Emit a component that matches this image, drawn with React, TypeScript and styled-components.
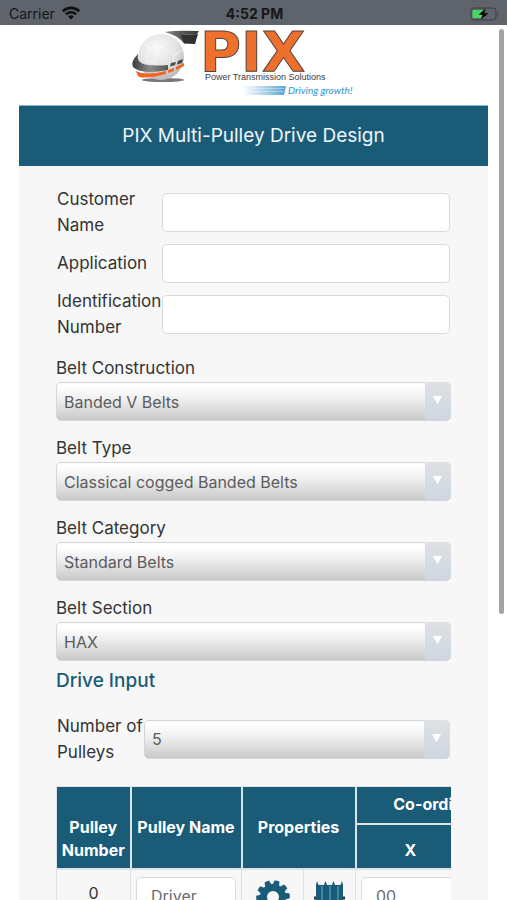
import React from "react";
import styled, { createGlobalStyle } from "styled-components";

const BLUE = "#1a5c78";
const FONT = `Inter, "Liberation Sans", sans-serif`;

const GlobalStyle = createGlobalStyle`
  *, *::before, *::after { box-sizing: border-box; }
  body { margin: 0; background: #fff; font-family: ${FONT}; color: #333; }
`;

const Screen = styled.div`
  position: relative;
  height: 100vh;
  overflow: hidden;
`;

const StatusBar = styled.header`
  display: grid;
  grid-template-columns: 1fr auto 1fr;
  align-items: center;
  height: 25px;
  padding: 2px 7px 0 9px;
  background: #5f636b;
  color: #15171a;
  font-size: 14px;
`;

const Carrier = styled.div`
  display: flex;
  align-items: center;
  gap: 6px;

  svg { margin-bottom: 2px; }
`;

const Clock = styled.time`
  font-size: 14px;
  font-weight: 700;
`;

const Battery = styled.div`
  display: flex;
  justify-content: flex-end;
`;

const Brand = styled.div`
  display: flex;
  justify-content: center;
  height: 80px;
  padding-right: 19px;
`;

const Main = styled.main`
  margin: 0 19px;
  background: #f7f7f7;
`;

const Title = styled.h1`
  margin: 0;
  padding: 18px 0;
  border-top: 1px solid #7fb9d2;
  background: ${BLUE};
  color: #eef5f8;
  font-size: 19px;
  font-weight: 400;
  line-height: 24px;
  text-align: center;
`;

const Form = styled.form`
  padding: 21px 37px 0;
  font-size: 16px;
  line-height: 26px;
`;

const Label = styled.label`
  font-size: 17px;
`;

const TextRows = styled.div`
  display: grid;
  grid-template-columns: 105px 1fr;
  grid-auto-rows: 51px;
  align-items: center;
  padding: 0 1px;

  ${Label} { padding-bottom: 2px; }
`;

const TextBox = styled.input`
  width: 100%;
  height: 39px;
  padding: 0 14px;
  border: 1px solid #d8dadc;
  border-radius: 5px;
  background: #fff;
  color: #6a6c6e;
  font: 16px ${FONT};
`;

const SelectGroups = styled.div`
  display: grid;
  gap: 14px;
  margin-top: 15px;
`;

const Group = styled.div`
  display: grid;
  gap: 1px;
`;

const SelectWrap = styled.div`
  position: relative;
  height: 39px;
`;

const Select = styled.select`
  appearance: none;
  display: block;
  width: 100%;
  height: 100%;
  padding: 0 34px 0 7px;
  border: 1px solid #d3d6d8;
  border-radius: 5px;
  background: linear-gradient(#fff 10%, #eee 45%, #c9c9c9);
  color: #5a5c5e;
  font: 16px ${FONT};
`;

const Arrow = styled.span`
  position: absolute;
  top: 0;
  right: 0;
  bottom: 0;
  width: 26px;
  padding: 14px 0 0 8px;
  border-radius: 0 5px 5px 0;
  background: linear-gradient(#dde1e4, #cfd6e0);
  pointer-events: none;

  svg { display: block; }
`;

const SectionTitle = styled.h2`
  margin: 7px 0 19px;
  color: ${BLUE};
  font-size: 19px;
  font-weight: 500;
  line-height: 26px;
`;

const CountRow = styled.div`
  display: grid;
  grid-template-columns: 87px 1fr;
  align-items: center;
  padding: 0 1px;
`;

const TableScroller = styled.div`
  margin-top: 21px;
  overflow: hidden;
`;

const Table = styled.table`
  width: 519px;
  table-layout: fixed;
  border-collapse: collapse;
  color: #333;
`;

const HeadCell = styled.th<{ $low?: boolean }>`
  padding: ${(p) => (p.$low ? "0 0 6px" : "0")};
  border: 2px solid #d9e3e8;
  border-top-width: 1px;
  background: ${BLUE};
  color: #fff;
  font-weight: 700;
  line-height: 23px;
  vertical-align: ${(p) => (p.$low ? "bottom" : "middle")};

  tr:first-child > &:first-child { border-left-width: 1px; }
`;

const HeadRow = styled.tr<{ $tall?: boolean }>`
  height: ${(p) => (p.$tall ? 45 : 37)}px;

  & + & ${HeadCell} { border-top-width: 2px; }
`;

const Cell = styled.td<{ $text?: boolean }>`
  height: 60px;
  padding: ${(p) => (p.$text ? 10 : 7)}px 5px 6px;
  border: 1px solid #dde0e2;
  line-height: 26px;
  text-align: center;
  vertical-align: top;
`;

const IconButton = styled.button`
  display: block;
  margin: 3px auto 0;
  padding: 0;
  border: 0;
  background: none;

  svg { display: block; }
`;

const ScrollThumb = styled.div`
  position: absolute;
  top: 29px;
  right: 3px;
  width: 5px;
  height: 65vh;
  border-radius: 3px;
  background: #a3a3a3;
`;

const Wifi = () => (
  <svg width="20" height="14" viewBox="0 0 20 14" fill="none" stroke="#111" strokeWidth="2.6">
    <path d="M1.8 5.2a11.8 11.8 0 0 1 16.4 0" />
    <path d="M4.9 8.3a7.4 7.4 0 0 1 10.2 0" />
    <path d="M10 13.6 7.1 10.6a4.2 4.2 0 0 1 5.8 0Z" fill="#111" stroke="none" />
  </svg>
);

const BatteryIcon = () => (
  <svg width="31" height="16" viewBox="0 0 31 16">
    <rect x="2" y="2" width="25" height="12" rx="3" fill="#5f636b" stroke="#3d4045" />
    <path d="M4.5 4H15v8H4.5a1 1 0 0 1-1-1V5a1 1 0 0 1 1-1Z" fill="#43d764" />
    <path d="M28.5 5.500q2 2.500 0 5Z" fill="#3d4045" />
    <path d="M16.5 2.500 9.500 8.800h4l-1.800 5L19.500 7.300h-4Z" fill="#0a0a0a" />
  </svg>
);

const Logo = () => (
  <svg width="228" height="76" viewBox="130 26 228 76" role="img" aria-label="PIX Power Transmission Solutions">
    <defs>
      <radialGradient id="globe" cx="0.4" cy="0.3" r="0.75">
        <stop offset="0" stopColor="#f8f8f8" />
        <stop offset="0.6" stopColor="#e2e2e2" />
        <stop offset="1" stopColor="#b4b4b4" />
      </radialGradient>
      <linearGradient id="belt">
        <stop offset="0" stopColor="#3a3a3a" />
        <stop offset="0.5" stopColor="#8a8a8a" />
        <stop offset="1" stopColor="#555" />
      </linearGradient>
      <linearGradient id="tail">
        <stop offset="0" stopColor="#8d8d8d" />
        <stop offset="0.5" stopColor="#555" />
        <stop offset="1" stopColor="#3a3a3a" />
      </linearGradient>
      <linearGradient id="swoosh">
        <stop offset="0" stopColor="#fff" />
        <stop offset="1" stopColor="#5aa5d4" />
      </linearGradient>
    </defs>
    <ellipse cx="163" cy="81" rx="21" ry="2" fill="#777" />
    <path d="M165 33q10-2 34-1l-2 3-15 1 3 9q-8-9-20-12Z" fill="url(#tail)" />
    <path d="m181 36 17-1-3 10-11-.5Z" fill="#303030" />
    <ellipse cx="161" cy="58" rx="23" ry="23" fill="url(#globe)" />
    <path d="m145 46 6 3 7-5 5 5 7-8m-20 8-4 12 9 4 3-13m8-3 8 7 8-5m-8 5-2 12" fill="none" stroke="#fff" strokeWidth="1" opacity=".6" />
    <path d="M138 55q-8 8-5 13 8 8 35 3v-5q-25 2-29-4-2-3-1-7Z" fill="url(#belt)" />
    <path d="M136 72q9 5 30 0v3q-17 5-27 3-2-2-3-6Z" fill="#f26522" />
    <path d="m168 71 6-2v3l-6 2Zm8-3 8-4v3l-8 4Z" fill="#f26522" />
    <path d="m171 64 5-1-1 3-5 1.500Zm7-2 5-2-1 4-5 1.500Z" fill="#484848" />
    <text x="200" y="72" fontFamily="DejaVu Sans" fontWeight="700" fontSize="56" fill="#ee702d" stroke="#554238" strokeWidth="1">PIX</text>
    <text x="205" y="81" fontFamily="Liberation Sans" fontSize="9" fill="#3c3c3c">Power Transmission Solutions</text>
    <path d="M243 87h43l-2 9h-41Z" fill="url(#swoosh)" />
    <path d="M250 89.500h34m-34 3h33" stroke="#fff" strokeWidth=".7" opacity=".5" />
    <text x="288" y="95" fontFamily="Lato, sans-serif" fontStyle="italic" fontWeight="500" fontSize="10" fill="#3d9bd0">Driving growth!</text>
  </svg>
);

const GearIcon = () => (
  <svg width="34" height="34" viewBox="-17 -17 34 34" fill={BLUE}>
    {[0, 1, 2, 3, 4, 5, 6, 7, 8, 9].map((i) => (
      <path key={i} d="M-3.500-11-2.500-16.500q2.500-.7 5 0l1 5.500Z" transform={`rotate(${i * 36 + 14})`} />
    ))}
    <circle r="9.500" fill="none" stroke={BLUE} strokeWidth="7" />
  </svg>
);

const PulleyIcon = () => (
  <svg width="34" height="34" viewBox="0 0 34 34">
    <path d="M4 1 5.500 5H11L12.500 1 14 5h5l1.500-4L22 5h5.500L29 1l1 4v28H3V5Z" fill={BLUE} />
    <path d="M9 6v26M17 6v26M25 6v26" stroke="#3f86a4" strokeWidth="2" />
    <path d="M1 18h2M30 18h2" stroke="#333" strokeWidth="3" />
  </svg>
);

type DropProps = { id: string; value: string };

const Dropdown = ({ id, value }: DropProps) => (
  <SelectWrap>
    <Select id={id} defaultValue={value}>
      <option>{value}</option>
    </Select>
    <Arrow>
      <svg width="9" height="9" viewBox="0 0 9 9">
        <path d="M0 0h9L4.500 8.500Z" fill="#fff" />
      </svg>
    </Arrow>
  </SelectWrap>
);

const textFields = [
  { id: "customer", label: "Customer Name" },
  { id: "application", label: "Application" },
  { id: "identification", label: "Identification Number" },
];

const belts = [
  { id: "construction", label: "Belt Construction", value: "Banded V Belts" },
  { id: "type", label: "Belt Type", value: "Classical cogged Banded Belts" },
  { id: "category", label: "Belt Category", value: "Standard Belts" },
  { id: "section", label: "Belt Section", value: "HAX" },
];

export default function App() {
  return (
    <Screen>
      <GlobalStyle />
      <StatusBar>
        <Carrier>Carrier <Wifi /></Carrier>
        <Clock>4:52 PM</Clock>
        <Battery><BatteryIcon /></Battery>
      </StatusBar>
      <Brand><Logo /></Brand>
      <Main>
        <Title>PIX Multi-Pulley Drive Design</Title>
        <Form>
          <TextRows>
            {textFields.map((f) => (
              <React.Fragment key={f.id}>
                <Label htmlFor={f.id}>{f.label}</Label>
                <TextBox id={f.id} />
              </React.Fragment>
            ))}
          </TextRows>
          <SelectGroups>
            {belts.map((b) => (
              <Group key={b.id}>
                <Label htmlFor={b.id}>{b.label}</Label>
                <Dropdown id={b.id} value={b.value} />
              </Group>
            ))}
          </SelectGroups>
          <SectionTitle>Drive Input</SectionTitle>
          <CountRow>
            <Label htmlFor="pulleys">Number of Pulleys</Label>
            <Dropdown id="pulleys" value="5" />
          </CountRow>
          <TableScroller>
            <Table>
              <colgroup>
                <col width="74" />
                <col width="111" />
                <col width="62" />
                <col width="52" />
                <col width="110" />
                <col width="110" />
              </colgroup>
              <thead>
                <HeadRow>
                  <HeadCell rowSpan={2} $low>Pulley Number</HeadCell>
                  <HeadCell rowSpan={2}>Pulley Name</HeadCell>
                  <HeadCell rowSpan={2} colSpan={2}>Properties</HeadCell>
                  <HeadCell colSpan={2}>Co-ordinates(mm)</HeadCell>
                </HeadRow>
                <HeadRow $tall>
                  <HeadCell $low>X</HeadCell>
                  <HeadCell $low>Y</HeadCell>
                </HeadRow>
              </thead>
              <tbody>
                <tr>
                  <Cell $text>0</Cell>
                  <Cell><TextBox aria-label="Pulley name" defaultValue="Driver" /></Cell>
                  <Cell><IconButton type="button" aria-label="Settings"><GearIcon /></IconButton></Cell>
                  <Cell><IconButton type="button" aria-label="Pulley"><PulleyIcon /></IconButton></Cell>
                  <Cell><TextBox aria-label="X" defaultValue="00" /></Cell>
                  <Cell><TextBox aria-label="Y" defaultValue="00" /></Cell>
                </tr>
              </tbody>
            </Table>
          </TableScroller>
        </Form>
      </Main>
      <ScrollThumb />
    </Screen>
  );
}
